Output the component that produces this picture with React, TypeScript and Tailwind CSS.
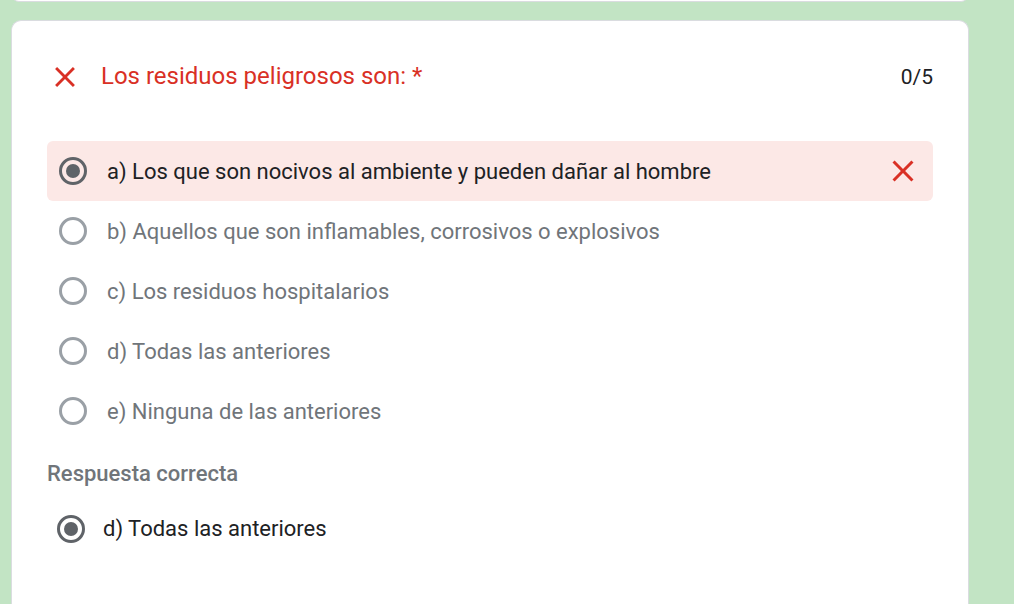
import React from "react";

const XIcon = ({ size = 24 }: { size?: number }) => (
  <svg width={size} height={size} viewBox="0 0 24 24" fill="#d93025">
    <path d="M19 6.41 17.59 5 12 10.59 6.41 5 5 6.41 10.59 12 5 17.59 6.41 19 12 13.41 17.59 19 19 17.59 13.41 12z" />
  </svg>
);

const Radio = ({ checked }: { checked?: boolean }) => (
  <div
    className={`w-[28px] h-[28px] rounded-full border-[3px] flex items-center justify-center shrink-0 ${
      checked ? "border-[#5f6368]" : "border-[#9aa0a6]"
    }`}
  >
    {checked && <div className="w-[14px] h-[14px] rounded-full bg-[#5f6368]" />}
  </div>
);

const options = [
  "a) Los que son nocivos al ambiente y pueden dañar al hombre",
  "b) Aquellos que son inflamables, corrosivos o explosivos",
  "c) Los residuos hospitalarios",
  "d) Todas las anteriores",
  "e) Ninguna de las anteriores",
];

export default function App() {
  return (
    <div
      className="w-[1014px] h-[604px] bg-[#c2e4c4] overflow-hidden relative"
      style={{ fontFamily: "Roboto, 'Noto Sans', sans-serif" }}
    >
      <div className="absolute left-[11px] top-[-20px] w-[958px] h-[22px] bg-white rounded-b-[8px] border border-[#dadce0]" />
      <div className="ml-[11px] mt-[20px] w-[958px] h-[600px] bg-white rounded-t-[10px] border border-[#dadce0] border-b-0 px-[35px]">
        <div className="flex items-center justify-between mt-[42px] h-[26px]">
          <div className="flex items-center">
            <div className="ml-[1px] mt-[2px]">
              <XIcon size={34} />
            </div>
            <div className="ml-[19px] text-[24px] text-[#d93025] leading-none">
              Los residuos peligrosos son: *
            </div>
          </div>
          <div className="text-[21px] text-[#202124] leading-none mt-[2px]">0/5</div>
        </div>
        <div className="mt-[52px] flex flex-col">
          {options.map((o, i) => (
            <div
              key={i}
              className={`h-[60px] flex items-center pl-[12px] pr-[12px] rounded-[6px] ${
                i === 0 ? "bg-[#fce8e6]" : ""
              }`}
            >
              <Radio checked={i === 0} />
              <div
                className={`ml-[20px] text-[22px] ${
                  i === 0 ? "text-[#202124]" : "text-[#70757a]"
                } flex-1`}
              >
                {o}
              </div>
              {i === 0 && <XIcon size={36} />}
            </div>
          ))}
        </div>
        <div className="mt-[16px] text-[22px] font-medium text-[#70757a]">Respuesta correcta</div>
        <div className="mt-[22px] flex items-center pl-[10px]">
          <Radio checked />
          <div className="ml-[18px] text-[22px] text-[#202124]">d) Todas las anteriores</div>
        </div>
      </div>
    </div>
  );
}
